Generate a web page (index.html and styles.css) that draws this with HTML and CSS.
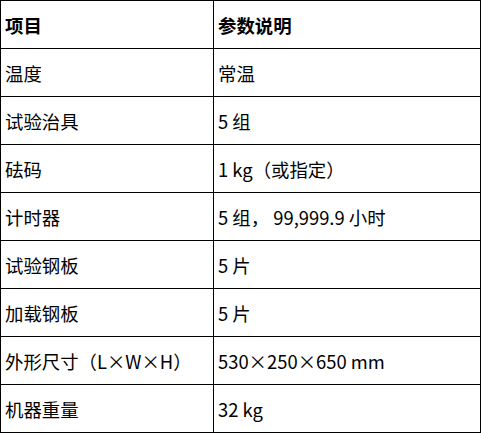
FILE: index.html
```html
<!DOCTYPE html>
<html lang="zh-CN">
<head>
<meta charset="utf-8">
<link rel="stylesheet" href="styles.css">
</head>
<body>
<table class="spec">
  <tr class="head"><th class="col-a">项目</th><th>参数说明</th></tr>
  <tr><td>温度</td><td>常温</td></tr>
  <tr><td>试验治具</td><td>5 组</td></tr>
  <tr><td>砝码</td><td>1 kg（或指定）</td></tr>
  <tr><td>计时器</td><td>5 组， 99,999.9 小时</td></tr>
  <tr><td>试验钢板</td><td>5 片</td></tr>
  <tr><td>加载钢板</td><td>5 片</td></tr>
  <tr><td>外形尺寸（L×W×H）</td><td>530×250×650 mm</td></tr>
  <tr><td>机器重量</td><td>32 kg</td></tr>
</table>
</body>
</html>
```
FILE: styles.css
```css
html, body {
  margin: 0;
  padding: 0;
  background: #fff;
}
.spec {
  border-collapse: collapse;
  width: 481px;
  font-family: "Noto Sans CJK SC", "Noto Sans", sans-serif;
  font-size: 18.4px;
  color: #000;
}
.spec th, .spec td {
  border: 1px solid #000;
  height: 48px;
  padding: 0 4px;
  text-align: left;
  vertical-align: middle;
  box-sizing: border-box;
}
.spec th {
  font-weight: bold;
}
.spec .col-a {
  width: 213px;
}
```
